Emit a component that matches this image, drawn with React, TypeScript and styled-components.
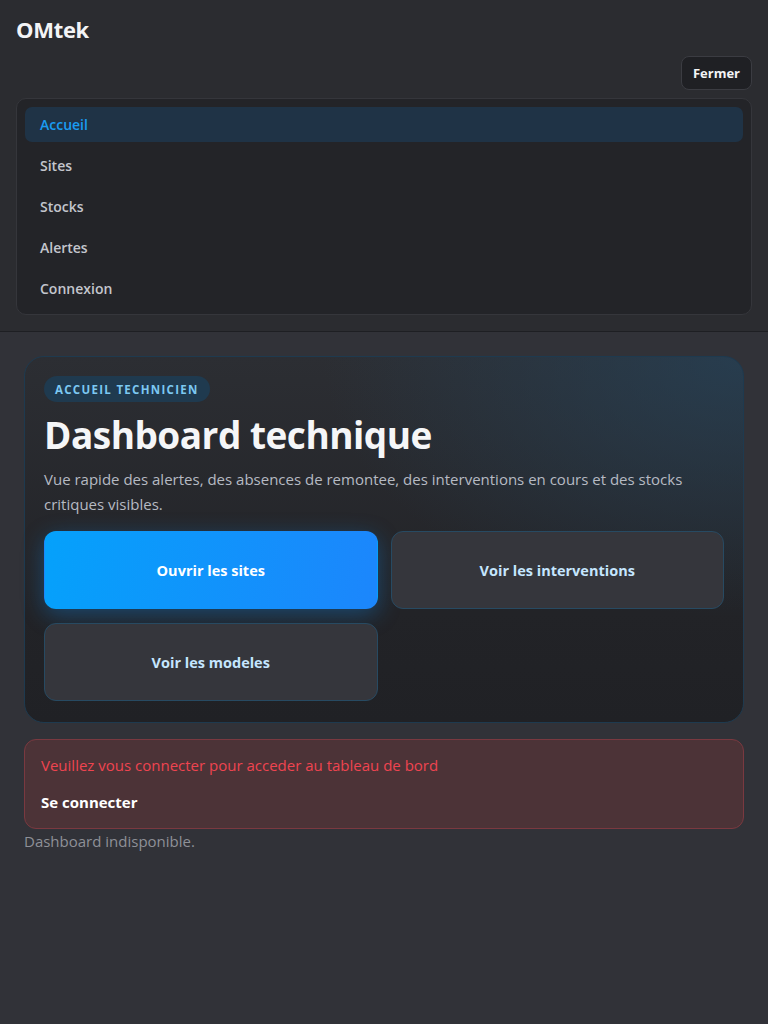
import React from "react";
import styled, { createGlobalStyle } from "styled-components";

const GlobalStyle = createGlobalStyle`
  html, body { margin: 0; padding: 0; }
  body {
    background: #313238;
    font-family: "Open Sans", "Noto Sans", "Liberation Sans", sans-serif;
    color: #e5e7eb;
  }
  * { box-sizing: border-box; }
`;

const Page = styled.div`
  min-height: 1024px;
  background: #313238;
`;

const Header = styled.header`
  background: #2b2c30;
  border-bottom: 1px solid #1e1f23;
  padding: 14px 16px 16px;
  display: flex;
  flex-direction: column;
`;

const Brand = styled.div`
  font-size: 22px;
  font-weight: 700;
  color: #f3f4f6;
  line-height: 30px;
  letter-spacing: -0.3px;
`;

const TopRow = styled.div`
  display: flex;
  justify-content: flex-end;
  margin-top: 12px;
`;

const CloseButton = styled.button`
  font-family: inherit;
  height: 34px;
  padding: 0 11px;
  background: #1f2024;
  border: 1px solid #3b3c42;
  border-radius: 8px;
  color: #f3f4f6;
  font-size: 13px;
  font-weight: 700;
`;

const Nav = styled.nav`
  margin-top: 8px;
  background: #232428;
  border: 1px solid #35363b;
  border-radius: 10px;
  padding: 8px 8px 8px;
  display: flex;
  flex-direction: column;
  gap: 6px;
`;

const NavItem = styled.div<{ $active?: boolean }>`
  height: 35px;
  display: flex;
  align-items: center;
  padding: 0 15px;
  border-radius: 7px;
  font-size: 14px;
  font-weight: 600;
  background: ${(p) => (p.$active ? "#1f3346" : "transparent")};
  color: ${(p) => (p.$active ? "#1a9cf2" : "#c3c6cd")};
`;

const Main = styled.main`
  padding: 24px 24px;
  display: flex;
  flex-direction: column;
`;

const Hero = styled.section`
  border-radius: 20px;
  border: 1px solid #1e3a4f;
  background:
    radial-gradient(ellipse 420px 260px at 100% 0%, rgba(38, 66, 88, 0.75), rgba(38, 66, 88, 0) 100%),
    linear-gradient(180deg, #2c2e33 0%, #222327 70%, #202125 100%);
  padding: 19px 19px 21px;
  display: flex;
  flex-direction: column;
`;

const Badge = styled.span`
  align-self: flex-start;
  height: 26px;
  padding: 0 11px;
  display: inline-flex;
  align-items: center;
  border-radius: 13px;
  background: #1f3a4f;
  color: #7cc8f2;
  font-size: 11.5px;
  font-weight: 700;
  letter-spacing: 1.3px;
`;

const Title = styled.h1`
  margin: 9px 0 0;
  font-size: 37px;
  line-height: 48px;
  font-weight: 700;
  color: #f5f6f8;
  letter-spacing: -0.5px;
`;

const Desc = styled.p`
  margin: 8px 0 0;
  font-size: 15px;
  line-height: 25px;
  color: #b6bac3;
`;

const ActionGrid = styled.div`
  margin-top: 14px;
  display: grid;
  grid-template-columns: 1fr 1fr;
  column-gap: 13px;
  row-gap: 14px;
`;

const ActionButton = styled.button<{ $primary?: boolean }>`
  font-family: inherit;
  height: 78px;
  border-radius: 12px;
  font-size: 14.5px;
  font-weight: 700;
  cursor: pointer;
  border: 1px solid ${(p) => (p.$primary ? "transparent" : "#274a62")};
  background: ${(p) =>
    p.$primary ? "linear-gradient(100deg, #05a1fb 0%, #1c86fc 100%)" : "#35363c"};
  color: ${(p) => (p.$primary ? "#ffffff" : "#c5e6ff")};
  box-shadow: ${(p) => (p.$primary ? "0 6px 22px rgba(14, 140, 240, 0.35)" : "none")};
`;

const Alert = styled.div`
  margin-top: 16px;
  background: #4c3337;
  border: 1px solid #7a3940;
  border-radius: 12px;
  padding: 14px 16px 15px;
  display: flex;
  flex-direction: column;
  gap: 15px;
`;

const AlertText = styled.div`
  font-size: 15px;
  line-height: 22px;
  color: #ef4450;
`;

const AlertLink = styled.div`
  font-size: 15px;
  line-height: 22px;
  font-weight: 700;
  color: #ffffff;
`;

const Muted = styled.div`
  font-size: 15px;
  line-height: 22px;
  color: #8e9097;
  margin-top: 1px;
`;

export default function App() {
  const navItems = ["Accueil", "Sites", "Stocks", "Alertes", "Connexion"];
  return (
    <>
      <GlobalStyle />
      <Page>
        <Header>
          <Brand>OMtek</Brand>
          <TopRow>
            <CloseButton>Fermer</CloseButton>
          </TopRow>
          <Nav>
            {navItems.map((n, i) => (
              <NavItem key={n} $active={i === 0}>
                {n}
              </NavItem>
            ))}
          </Nav>
        </Header>
        <Main>
          <Hero>
            <Badge>ACCUEIL TECHNICIEN</Badge>
            <Title>Dashboard technique</Title>
            <Desc>
              Vue rapide des alertes, des absences de remontee, des interventions en cours et des stocks
              critiques visibles.
            </Desc>
            <ActionGrid>
              <ActionButton $primary>Ouvrir les sites</ActionButton>
              <ActionButton>Voir les interventions</ActionButton>
              <ActionButton>Voir les modeles</ActionButton>
            </ActionGrid>
          </Hero>
          <Alert>
            <AlertText>Veuillez vous connecter pour acceder au tableau de bord</AlertText>
            <AlertLink>Se connecter</AlertLink>
          </Alert>
          <Muted>Dashboard indisponible.</Muted>
        </Main>
      </Page>
    </>
  );
}
